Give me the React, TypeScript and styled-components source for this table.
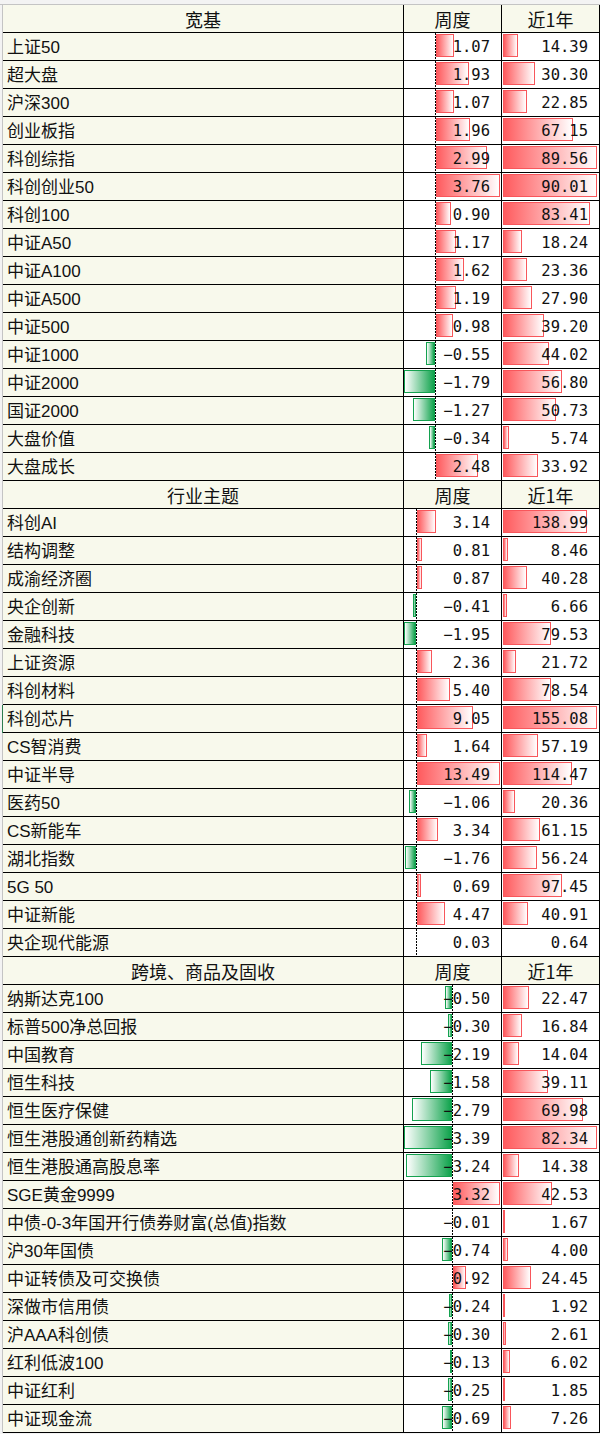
import React from "react";
import styled, { createGlobalStyle } from "styled-components";

type Row = [string, number, number];
type Section = { title: string; rows: Row[] };

const SECTIONS: Section[] = [
  {
    title: "宽基",
    rows: [
      ["上证50", 1.07, 14.39],
      ["超大盘", 1.93, 30.3],
      ["沪深300", 1.07, 22.85],
      ["创业板指", 1.96, 67.15],
      ["科创综指", 2.99, 89.56],
      ["科创创业50", 3.76, 90.01],
      ["科创100", 0.9, 83.41],
      ["中证A50", 1.17, 18.24],
      ["中证A100", 1.62, 23.36],
      ["中证A500", 1.19, 27.9],
      ["中证500", 0.98, 39.2],
      ["中证1000", -0.55, 44.02],
      ["中证2000", -1.79, 56.8],
      ["国证2000", -1.27, 50.73],
      ["大盘价值", -0.34, 5.74],
      ["大盘成长", 2.48, 33.92],
    ],
  },
  {
    title: "行业主题",
    rows: [
      ["科创AI", 3.14, 138.99],
      ["结构调整", 0.81, 8.46],
      ["成渝经济圈", 0.87, 40.28],
      ["央企创新", -0.41, 6.66],
      ["金融科技", -1.95, 79.53],
      ["上证资源", 2.36, 21.72],
      ["科创材料", 5.4, 78.54],
      ["科创芯片", 9.05, 155.08],
      ["CS智消费", 1.64, 57.19],
      ["中证半导", 13.49, 114.47],
      ["医药50", -1.06, 20.36],
      ["CS新能车", 3.34, 61.15],
      ["湖北指数", -1.76, 56.24],
      ["5G 50", 0.69, 97.45],
      ["中证新能", 4.47, 40.91],
      ["央企现代能源", 0.03, 0.64],
    ],
  },
  {
    title: "跨境、商品及固收",
    rows: [
      ["纳斯达克100", -0.5, 22.47],
      ["标普500净总回报", -0.3, 16.84],
      ["中国教育", -2.19, 14.04],
      ["恒生科技", -1.58, 39.11],
      ["恒生医疗保健", -2.79, 69.98],
      ["恒生港股通创新药精选", -3.39, 82.34],
      ["恒生港股通高股息率", -3.24, 14.38],
      ["SGE黄金9999", 3.32, 42.53],
      ["中债-0-3年国开行债券财富(总值)指数", -0.01, 1.67],
      ["沪30年国债", -0.74, 4.0],
      ["中证转债及可交换债", 0.92, 24.45],
      ["深做市信用债", -0.24, 1.92],
      ["沪AAA科创债", -0.3, 2.61],
      ["红利低波100", -0.13, 6.02],
      ["中证红利", -0.25, 1.85],
      ["中证现金流", -0.69, 7.26],
    ],
  },
];

// room for the data bars inside the two number columns
const WEEK_W = 95;
const YEAR_W = 94;

const GlobalStyle = createGlobalStyle`
  html, body {
    margin: 0;
    padding: 0;
    background: #f3f3f3;
  }
`;

const Sheet = styled.div`
  width: 600px;
  display: flex;
  flex-direction: column;
`;

const TopStrip = styled.div`
  height: 4px;
  background: #f3f3f3;
  border-bottom: 1px solid #c4c4c4;
`;

const Body = styled.div`
  padding-left: 2px;
`;

const Grid = styled.div`
  display: grid;
  grid-template-columns: 401px 98px 98px;
  border-left: 1px solid #c4c4c4;
`;

const Cell = styled.div`
  box-sizing: border-box;
  height: 28px;
  border-right: 1px solid #000;
  border-bottom: 1px solid #000;
  line-height: 29px;
  white-space: nowrap;
  overflow: hidden;
`;

const HeadCell = styled(Cell)`
  background: #f8f9ec;
  text-align: center;
  font-family: "Noto Sans CJK SC", sans-serif;
  font-size: 18px;
  color: #111;
`;

const NameCell = styled(Cell)<{ $mark?: boolean }>`
  background: #f8f9ec;
  padding-left: 4px;
  font-family: "Liberation Sans", "Noto Sans CJK SC", sans-serif;
  font-size: 17px;
  color: #111;
  overflow: visible;
  box-shadow: ${(p) => (p.$mark ? "-1px 0 0 #2e7d4f" : "none")};
`;

/* number cell: bar track, axis and value stacked in one grid area */
const BarCell = styled(Cell)`
  display: grid;
  background: #fff;
  & > * {
    grid-area: 1 / 1;
  }
`;

const Track = styled.div`
  display: flex;
  align-items: flex-start;
  padding-top: 1px;
`;

const Bar = styled.div<{ $neg?: boolean }>`
  flex: none;
  height: 23px;
  box-sizing: border-box;
  border: 1px solid ${(p) => (p.$neg ? "#14a14f" : "#f8565b")};
  background: ${(p) =>
    p.$neg
      ? "linear-gradient(to right, #ffffff, #0fa34c)"
      : "linear-gradient(to right, #ff5b5e, #ffffff)"};
`;

const AxisLane = styled.div`
  display: flex;
`;

const Axis = styled.div`
  flex: none;
  width: 1px;
  background: repeating-linear-gradient(to bottom, #000 0 2px, transparent 2px 3px);
`;

const Value = styled.div`
  padding-right: 11px;
  text-align: right;
  font-family: "DejaVu Sans Mono", "Liberation Mono", monospace;
  font-size: 15.5px;
  color: #111;
`;

const fmt = (v: number) => (v < 0 ? "\u2212" : "") + Math.abs(v).toFixed(2);

const WeekCell = ({ v, min, max }: { v: number; min: number; max: number }) => {
  const lo = Math.min(min, 0);
  const scale = WEEK_W / (max - lo);
  const axis = Math.round(-lo * scale);
  const len = Math.round(Math.abs(v) * scale);
  const start = v < 0 ? axis - len : axis + 1;
  return (
    <BarCell>
      <Track>{len > 0 && <Bar $neg={v < 0} style={{ marginLeft: start, width: len }} />}</Track>
      <AxisLane>
        <Axis style={{ marginLeft: axis }} />
      </AxisLane>
      <Value>{fmt(v)}</Value>
    </BarCell>
  );
};

const YearCell = ({ v, max }: { v: number; max: number }) => {
  const len = Math.round((v / max) * YEAR_W);
  return (
    <BarCell>
      <Track>{len > 0 && <Bar style={{ marginLeft: 1, width: len }} />}</Track>
      <Value>{fmt(v)}</Value>
    </BarCell>
  );
};

const SectionRows = ({ section }: { section: Section }) => {
  const weeks = section.rows.map((r) => r[1]);
  const years = section.rows.map((r) => r[2]);
  const wMin = Math.min(...weeks);
  const wMax = Math.max(...weeks);
  const yMax = Math.max(...years);
  return (
    <>
      <HeadCell>{section.title}</HeadCell>
      <HeadCell>周度</HeadCell>
      <HeadCell>近1年</HeadCell>
      {section.rows.map(([name, w, y]) => (
        <React.Fragment key={name}>
          <NameCell $mark={name === "科创芯片"}>{name}</NameCell>
          <WeekCell v={w} min={wMin} max={wMax} />
          <YearCell v={y} max={yMax} />
        </React.Fragment>
      ))}
    </>
  );
};

const App = () => (
  <>
    <GlobalStyle />
    <Sheet>
      <TopStrip />
      <Body>
        <Grid>
          {SECTIONS.map((s) => (
            <SectionRows key={s.title} section={s} />
          ))}
        </Grid>
      </Body>
    </Sheet>
  </>
);

export default App;
